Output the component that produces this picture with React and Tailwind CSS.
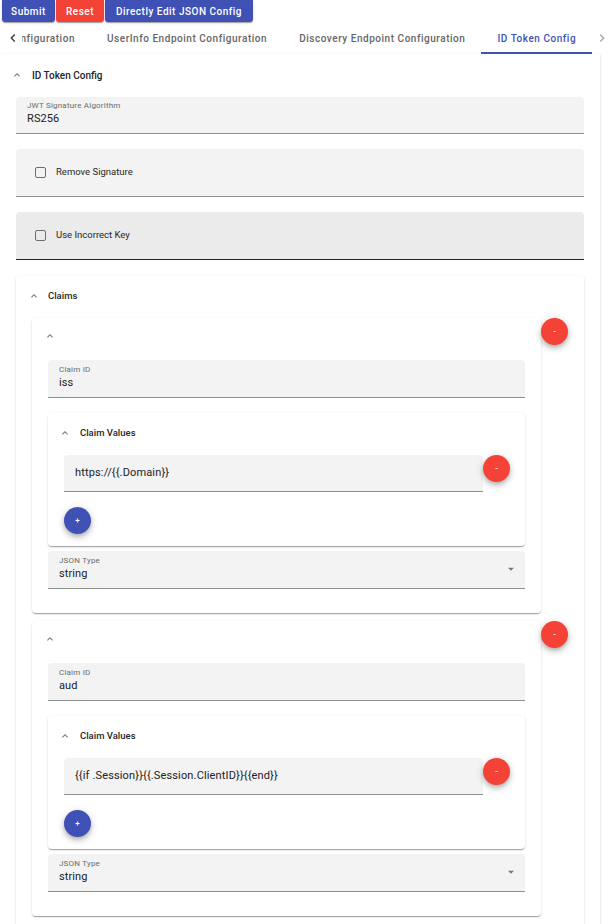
import React from "react";

const SH1 = "shadow-[0px_2px_1px_-1px_rgba(0,0,0,0.2),0px_1px_1px_0px_rgba(0,0,0,0.14),0px_1px_3px_0px_rgba(0,0,0,0.12)]";
const SHFAB = "shadow-[0px_2px_4px_-1px_rgba(0,0,0,0.2),0px_4px_6px_0px_rgba(0,0,0,0.14),0px_1px_10px_0px_rgba(0,0,0,0.12)]";

function Chevron() {
  return (
    <svg viewBox="0 0 24 24" className="w-3 h-3 shrink-0" fill="#757575">
      <path d="M12 8l-6 6 1.41 1.41L12 10.83l4.59 4.58L18 14z" />
    </svg>
  );
}

function Field({ label, value, select, h = "h-[38px]", pt = "pt-[5px]" }) {
  return (
    <div className={`relative ${h} ${pt} bg-[#f3f3f3] rounded-t-[4px] border-b border-[#8f8f8f] px-[11px]`}>
      <div className="text-[8px] leading-[10px] text-[#6b6b6b] tracking-[0.2px]">{label}</div>
      <div className="mt-[1px] text-[11px] leading-[14px] text-[#212121] tracking-[0.1px]">{value}</div>
      {select && (
        <svg viewBox="0 0 24 24" className="absolute right-[7px] top-[11px] w-[14px] h-[14px]" fill="#757575">
          <path d="M7 10l5 5 5-5z" />
        </svg>
      )}
    </div>
  );
}

function Fab({ color, children, className = "" }) {
  return (
    <div
      className={`w-[27px] h-[27px] shrink-0 rounded-full ${color} ${SHFAB} flex items-center justify-center text-white text-[8px] leading-none font-medium ${className}`}
    >
      {children}
    </div>
  );
}

function CheckField({ label, hover }) {
  return (
    <div
      className={`h-[48px] rounded-t-[4px] flex items-center pl-[19px] ${
        hover ? "bg-[#ebebeb] border-b border-[#212121]" : "bg-[#f3f3f3] border-b border-[#8f8f8f]"
      }`}
    >
      <div className="w-[11px] h-[11px] border-[1.5px] border-[#6e6e6e] rounded-[2px] bg-transparent" />
      <div className="ml-[10px] text-[9.5px] text-[#262626]">{label}</div>
    </div>
  );
}

function Claim({ id, value }) {
  return (
    <div className="flex items-start">
      <div className={`flex-1 bg-white rounded-[4px] ${SH1} px-4 pt-2 pb-[24px]`}>
        <div className="h-5 flex items-center -ml-1">
          <Chevron />
        </div>
        <div className="mt-[14px]">
          <Field label="Claim ID" value={id} />
        </div>
        <div className={`mt-[15px] bg-white rounded-[4px] ${SH1} pl-4 pr-[15px] pt-[10px] pb-3`}>
          <div className="h-5 flex items-center -ml-[5px]">
            <Chevron />
            <span className="ml-[9px] text-[9.5px] font-medium text-[#262626]">Claim Values</span>
          </div>
          <div className="mt-3 flex items-start">
            <div className="flex-1 h-[37px] bg-[#f3f3f3] rounded-t-[4px] border-b border-[#8f8f8f] flex items-center px-[11px] text-[11px] tracking-[0.15px] text-[#212121]">
              {value}
            </div>
            <Fab color="bg-[#f44336]">-</Fab>
          </div>
          <div className="mt-[15px]">
            <Fab color="bg-[#3f51b5]">+</Fab>
          </div>
        </div>
        <div className="mt-[5px]">
          <Field label="JSON Type" value="string" select />
        </div>
      </div>
      <Fab color="bg-[#f44336]">-</Fab>
    </div>
  );
}

export default function App() {
  return (
    <div className="w-[612px] h-[924px] overflow-hidden bg-white font-['Roboto',sans-serif]">
      {/* top buttons */}
      <div className="flex h-[22px] pl-[2px] gap-[1px]">
        <div className={`w-[53px] bg-[#3f51b5] rounded-b-[3px] ${SH1} text-white text-[10px] font-medium tracking-[0.5px] flex items-center justify-center`}>
          Submit
        </div>
        <div className={`w-[48px] bg-[#f44336] rounded-b-[3px] ${SH1} text-white text-[10px] font-medium tracking-[0.5px] flex items-center justify-center`}>
          Reset
        </div>
        <div className={`w-[148px] bg-[#3f51b5] rounded-b-[3px] ${SH1} text-white text-[10px] font-medium tracking-[0.5px] flex items-center justify-center`}>
          Directly Edit JSON Config
        </div>
      </div>

      {/* tabs */}
      <div className="flex h-[32px] items-stretch">
        <div className="w-[22px] flex items-center justify-center">
          <svg viewBox="0 0 24 24" className="w-4 h-4 ml-[3px]" fill="#333">
            <path d="M15.41 16.59L10.83 12l4.58-4.59L14 6l-6 6 6 6 1.41-1.41z" />
          </svg>
        </div>
        <div className="flex overflow-hidden text-[10px] font-medium tracking-[0.53px] text-[#666]">
          <div className="w-[69px] pr-4 flex items-center justify-end overflow-hidden whitespace-nowrap shrink-0">
            Authorization Endpoint Configuration
          </div>
          <div className="px-4 flex items-center whitespace-nowrap shrink-0">UserInfo Endpoint Configuration</div>
          <div className="px-4 flex items-center whitespace-nowrap shrink-0">Discovery Endpoint Configuration</div>
          <div className="px-4 flex items-center whitespace-nowrap shrink-0 text-[#3f51b5] border-b-2 border-[#3f51b5] pt-[2px]">
            ID Token Config
          </div>
        </div>
        <div className="flex-1 flex items-center justify-center">
          <svg viewBox="0 0 24 24" className="w-4 h-4" fill="#a8a8a8">
            <path d="M8.59 16.59L13.17 12 8.59 7.41 10 6l6 6-6 6-1.41-1.41z" />
          </svg>
        </div>
      </div>

      {/* main paper */}
      <div className={`w-[600px] bg-white ${SH1} px-4 pt-[10px] pb-4`}>
        <div className="h-[22px] flex items-center -ml-[5px]">
          <Chevron />
          <span className="ml-[9px] text-[10px] font-medium text-[#262626]">ID Token Config</span>
        </div>
        <div className="mt-[11px]">
          <Field label="JWT Signature Algorithm" value="RS256" h="h-[37px]" pt="pt-[4px]" />
        </div>
        <div className="mt-[15px]">
          <CheckField label="Remove Signature" />
        </div>
        <div className="mt-[15px]">
          <CheckField label="Use Incorrect Key" hover />
        </div>

        <div className={`mt-[16px] bg-white rounded-[4px] ${SH1} pl-4 pr-4 pt-[10px] pb-4`}>
          <div className="h-5 flex items-center -ml-1">
            <Chevron />
            <span className="ml-2 text-[9.5px] font-medium text-[#262626]">Claims</span>
          </div>
          <div className="mt-3 flex flex-col gap-2">
            <Claim id="iss" value="https://{{.Domain}}" />
            <Claim id="aud" value="{{if .Session}}{{.Session.ClientID}}{{end}}" />
          </div>
        </div>
      </div>
    </div>
  );
}
